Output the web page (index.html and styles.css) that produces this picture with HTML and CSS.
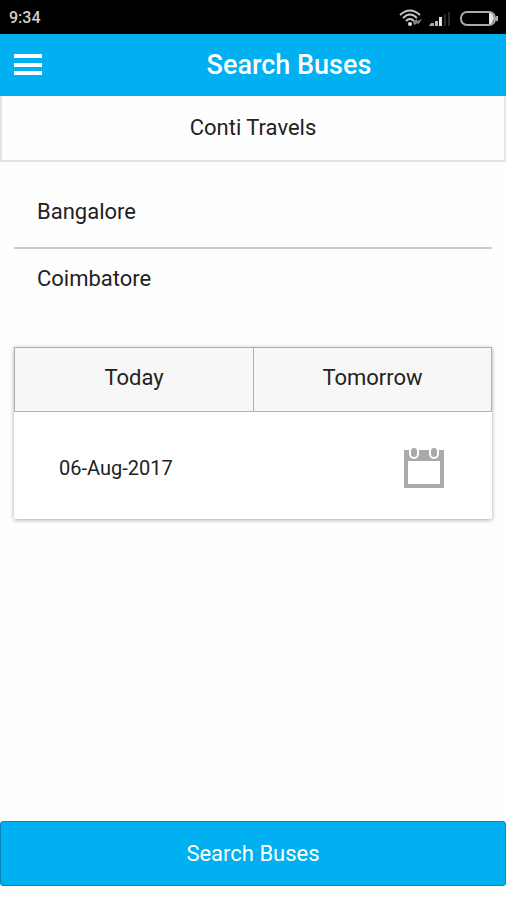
FILE: index.html
```html
<!DOCTYPE html>
<html lang="en">
<head>
<meta charset="utf-8">
<meta name="viewport" content="width=device-width, initial-scale=1">
<title>Search Buses</title>
<link rel="stylesheet" href="styles.css">
</head>
<body>
<div class="status">
  <span class="clock">9:34</span>
  <svg class="status-icons" viewBox="0 0 100 18" aria-hidden="true">
    <g fill="none" stroke="#c8c8c8" stroke-width="2">
      <path d="M2 6Q12-3 22 6"/>
      <path d="M5 9Q12 2 19 9"/>
      <path d="M8 12Q12 8 16 12"/>
    </g>
    <circle cx="12" cy="15" r="2" fill="#e0e0e0"/>
    <path d="M15 13l4-3v2l5-2-4 6v-2l-4 2z" fill="#858585"/>
    <path d="M33 14h3v3h-5z" fill="#aaa"/>
    <path d="M37 12h3v5h-3z" fill="#bbb"/>
    <path d="M41 8h3v9h-3z" fill="#e5e5e5"/>
    <path d="M46 5h2v12h-2zM50 3h2v14h-2z" fill="#292929"/>
    <rect x="63" y="3" width="34" height="13" rx="6" fill="none" stroke="#aaa" stroke-width="2"/>
    <path d="M91 4h2q3 2 3 5T93 15h-2z" fill="#e5e5e5"/>
    <path d="M98 7h2v5h-2z" fill="#aaa"/>
  </svg>
</div>
<header class="bar">
  <button class="menu" type="button" aria-label="Menu">
    <svg viewBox="0 0 28 22" aria-hidden="true"><path d="M0 0h28v4H0zM0 9h28v4H0zM0 17h28v4H0z" fill="#fff"/></svg>
  </button>
  <h1 class="title">Search Buses</h1>
</header>
<form class="search">
  <h2 class="operator">Conti Travels</h2>
  <div class="route">
    <input class="place" type="text" aria-label="From" value="Bangalore">
    <input class="place" type="text" aria-label="To" value="Coimbatore">
  </div>
  <section class="card">
    <div class="days">
      <button class="day" type="button">Today</button>
      <button class="day" type="button">Tomorrow</button>
    </div>
    <div class="date-row">
      <input class="date" type="text" aria-label="Travel date" value="06-Aug-2017">
      <button class="pick" type="button" aria-label="Choose date">
        <svg viewBox="0 0 40 41" aria-hidden="true">
          <path fill="#a9a9a9" fill-rule="evenodd" d="M0 3h40v38H0zM4 14v23h32V14z"/>
          <g fill="#a9a9a9" stroke="#fff" stroke-width="2">
            <rect x="6" y="0" width="8" height="11" rx="4"/>
            <rect x="26" y="0" width="8" height="11" rx="4"/>
          </g>
        </svg>
      </button>
    </div>
  </section>
  <button class="submit" type="button">Search Buses</button>
</form>
</body>
</html>
```
FILE: styles.css
```css
* {
  box-sizing: border-box;
}

body {
  margin: 0;
  min-height: 100vh;
  display: flex;
  flex-direction: column;
  background: #fefefe;
  color: #222;
  font: 22px/28px Roboto, sans-serif;
}

button,
input {
  margin: 0;
  padding: 0;
  border: 0;
  border-radius: 0;
  background: none;
  color: inherit;
  font: inherit;
}

svg {
  display: block;
}

.status {
  height: 34px;
  padding: 2px 8px 0 9px;
  display: flex;
  align-items: center;
  justify-content: space-between;
  background: #000;
}

.clock {
  color: #d0d0d0;
  font-size: 16px;
  font-weight: 500;
}

.status-icons {
  width: 100px;
  height: 18px;
}

.bar {
  height: 62px;
  display: grid;
  grid-template-columns: 72px 1fr;
  align-items: center;
  background: #00b0f0;
  color: #fff;
}

.menu {
  padding-left: 14px;
}

.menu svg {
  width: 28px;
  height: 22px;
}

.title {
  margin: 0;
  font-size: 27px;
  font-weight: 500;
  line-height: 32px;
  text-align: center;
}

.search {
  flex: 1;
  display: flex;
  flex-direction: column;
}

.operator {
  margin: 0;
  padding: 18px 0;
  border: 2px solid #e4e4e4;
  border-top: 0;
  font-size: 22px;
  font-weight: 400;
  text-align: center;
}

.route {
  margin: 14px 14px 0;
  display: flex;
  flex-direction: column;
}

.place {
  width: 100%;
  height: 58px;
  padding: 0 23px;
}

.place:first-child {
  height: 73px;
  border-bottom: 2px solid #ccc;
}

.card {
  margin: 40px 14px 0;
  background: #fff;
  border-radius: 2px;
  box-shadow: 0 1px 4px rgba(0, 0, 0, 0.35);
}

.days {
  display: grid;
  grid-template-columns: 1fr 1fr;
  border: 1px solid #b0b0b0;
}

.day {
  height: 63px;
  padding-bottom: 4px;
  background: #f7f7f7;
}

.day + .day {
  border-left: 1px solid #b0b0b0;
}

.date-row {
  padding: 35px 48px 31px 45px;
  display: flex;
  align-items: center;
  justify-content: space-between;
}

.date {
  min-width: 0;
  flex: 1;
  font-size: 20px;
}

.pick svg {
  width: 40px;
  height: 41px;
}

.submit {
  height: 65px;
  margin: auto 0 14px;
  border: 1px solid #0a86b8;
  border-radius: 3px;
  background: #00b0f0;
  color: #fff;
}
```
